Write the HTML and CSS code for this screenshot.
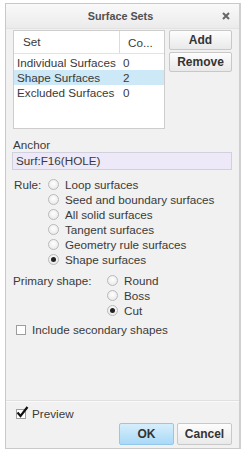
FILE: index.html
```html
<!DOCTYPE html>
<html lang="en">
<head>
  <meta charset="UTF-8">
  <title>Surface Sets</title>
  <link rel="stylesheet" href="styles.css">
</head>
<body>
  <div class="dialog">
    <div class="titlebar">
      <span class="title">Surface Sets</span>
      <svg class="close" width="8" height="8" viewBox="0 0 8 8">
        <path d="M1 1L7 7M7 1L1 7" stroke="#666" stroke-width="2"/>
      </svg>
    </div>

    <div class="content">
      <div class="sets-row">
        <div class="set-list">
          <div class="list-head">
            <div class="col-set">Set</div>
            <div class="col-count">Co...</div>
          </div>
          <div class="list-row">
            <div class="col-set">Individual Surfaces</div>
            <div class="col-count">0</div>
          </div>
          <div class="list-row selected">
            <div class="col-set">Shape Surfaces</div>
            <div class="col-count">2</div>
          </div>
          <div class="list-row">
            <div class="col-set">Excluded Surfaces</div>
            <div class="col-count">0</div>
          </div>
        </div>
        <div class="side-buttons">
          <button class="btn">Add</button>
          <button class="btn">Remove</button>
        </div>
      </div>

      <div class="anchor-label">Anchor</div>
      <div class="anchor-field">Surf:F16(HOLE)</div>

      <div class="option-group rule-group">
        <div class="group-label">Rule:</div>
        <div class="options">
          <div class="option"><span class="radio"></span>Loop surfaces</div>
          <div class="option"><span class="radio"></span>Seed and boundary surfaces</div>
          <div class="option"><span class="radio"></span>All solid surfaces</div>
          <div class="option"><span class="radio"></span>Tangent surfaces</div>
          <div class="option"><span class="radio"></span>Geometry rule surfaces</div>
          <div class="option"><span class="radio checked"></span>Shape surfaces</div>
        </div>
      </div>

      <div class="option-group shape-group">
        <div class="group-label">Primary shape:</div>
        <div class="options">
          <div class="option"><span class="radio"></span>Round</div>
          <div class="option"><span class="radio"></span>Boss</div>
          <div class="option"><span class="radio checked"></span>Cut</div>
        </div>
      </div>

      <div class="check-row secondary">
        <span class="checkbox"></span>Include secondary shapes
      </div>
    </div>

    <div class="footer">
      <div class="check-row preview">
        <span class="checkbox">
          <svg class="tick" width="13" height="12" viewBox="0 0 13 12">
            <path d="M1.5 6.5L4.5 10L11.5 1" stroke="#111" stroke-width="2.2" fill="none"/>
          </svg>
        </span>Preview
      </div>
      <div class="footer-buttons">
        <button class="btn btn-ok">OK</button>
        <button class="btn btn-cancel">Cancel</button>
      </div>
    </div>
  </div>
</body>
</html>
```

FILE: styles.css
```css
body {
  margin: 0;
  background-color: #ffffff;
  font-family: 'Liberation Sans', Arial, sans-serif;
  font-size: 11.7px;
  color: #3a3a3a;
}
.dialog {
  box-sizing: border-box;
  width: 236px;
  height: 446px;
  margin: 3px 0 0 5px;
  border: 1px solid #c9c9c9;
  border-right: 2px solid #cfcfcf;
  background-color: #f1f1f1;
  display: flex;
  flex-direction: column;
}
.titlebar {
  height: 24px;
  flex-shrink: 0;
  display: flex;
  align-items: center;
  justify-content: center;
  position: relative;
  background: linear-gradient(#f9f9f9, #ebebeb);
  border-bottom: 1px solid #e2e2e2;
}
.title {
  font-size: 10.8px;
  font-weight: bold;
  color: #505050;
  margin-left: -4px;
}
.close {
  position: absolute;
  right: 9px;
  top: 8px;
}
.content {
  padding: 1px 7px 0 7px;
}
.sets-row {
  display: flex;
  gap: 4px;
}
.set-list {
  box-sizing: border-box;
  width: 152px;
  height: 99px;
  border: 1px solid #cdcdcd;
  background-color: #ffffff;
}
.list-head {
  display: flex;
  height: 22px;
  border-bottom: 1px solid #e3e3e3;
  align-items: center;
}
.list-head .col-set {
  box-sizing: border-box;
  width: 106px;
  padding-left: 9px;
  border-right: 1px solid #dcdcdc;
  line-height: 22px;
}
.list-head .col-count {
  padding-left: 8px;
}
.list-row {
  display: flex;
  height: 15px;
  line-height: 15px;
  margin-top: 1px;
}
.list-row + .list-row {
  margin-top: 0;
}
.list-row .col-set {
  width: 106px;
  padding-left: 3px;
  box-sizing: border-box;
}
.list-row .col-count {
  padding-left: 3px;
}
.list-row.selected {
  background-color: #cde8f6;
}
.side-buttons {
  display: flex;
  flex-direction: column;
  gap: 2px;
}
.btn {
  box-sizing: border-box;
  font-family: 'Liberation Sans', Arial, sans-serif;
  font-size: 12px;
  font-weight: bold;
  color: #333333;
  background: linear-gradient(#fdfdfd, #e9e9e9);
  border: 1px solid #c8c8c8;
  border-radius: 2px;
  padding: 0;
}
.side-buttons .btn {
  width: 63px;
  height: 20px;
}
.anchor-label {
  margin-top: 8px;
  line-height: 15px;
}
.anchor-field {
  box-sizing: border-box;
  height: 18px;
  line-height: 16px;
  margin-left: -1px;
  padding-left: 3px;
  border: 1px solid #d2d0dc;
  background-color: #ede9f8;
}
.option-group {
  display: flex;
}
.rule-group {
  margin-top: 7px;
  padding-left: 1px;
}
.rule-group .group-label {
  width: 34px;
}
.shape-group {
  margin-top: 6px;
}
.shape-group .group-label {
  width: 94px;
}
.group-label,
.option {
  line-height: 15px;
}
.option {
  display: flex;
  align-items: center;
}
.radio {
  box-sizing: border-box;
  width: 11px;
  height: 11px;
  border-radius: 50%;
  border: 1px solid #b9b9b9;
  background: radial-gradient(circle at 50% 40%, #ffffff, #e4e4e4);
  margin-right: 6px;
  display: flex;
  align-items: center;
  justify-content: center;
}
.radio.checked::after {
  content: '';
  width: 5px;
  height: 5px;
  border-radius: 50%;
  background-color: #222222;
}
.check-row {
  display: flex;
  align-items: center;
  line-height: 15px;
}
.secondary {
  margin-top: 4px;
  padding-left: 3px;
}
.checkbox {
  box-sizing: border-box;
  width: 10px;
  height: 10px;
  border: 1px solid #9e9e9e;
  background-color: #ffffff;
  margin-right: 6px;
  position: relative;
}
.tick {
  position: absolute;
  left: -1px;
  top: -4px;
}
.footer {
  margin-top: auto;
  border-top: 1px solid #e0e0e0;
  box-shadow: inset 0 1px 0 #fafafa;
  padding: 5px 7px 3px 7px;
}
.preview {
  padding-left: 3px;
}
.footer-buttons {
  display: flex;
  justify-content: flex-end;
  gap: 3px;
  margin-top: 2px;
}
.btn-ok,
.btn-cancel {
  height: 22px;
}
.btn-ok {
  width: 55px;
  background: linear-gradient(#d7eefc, #a9d9f7);
  border-color: #93c8ec;
}
.btn-cancel {
  width: 55px;
}
```
